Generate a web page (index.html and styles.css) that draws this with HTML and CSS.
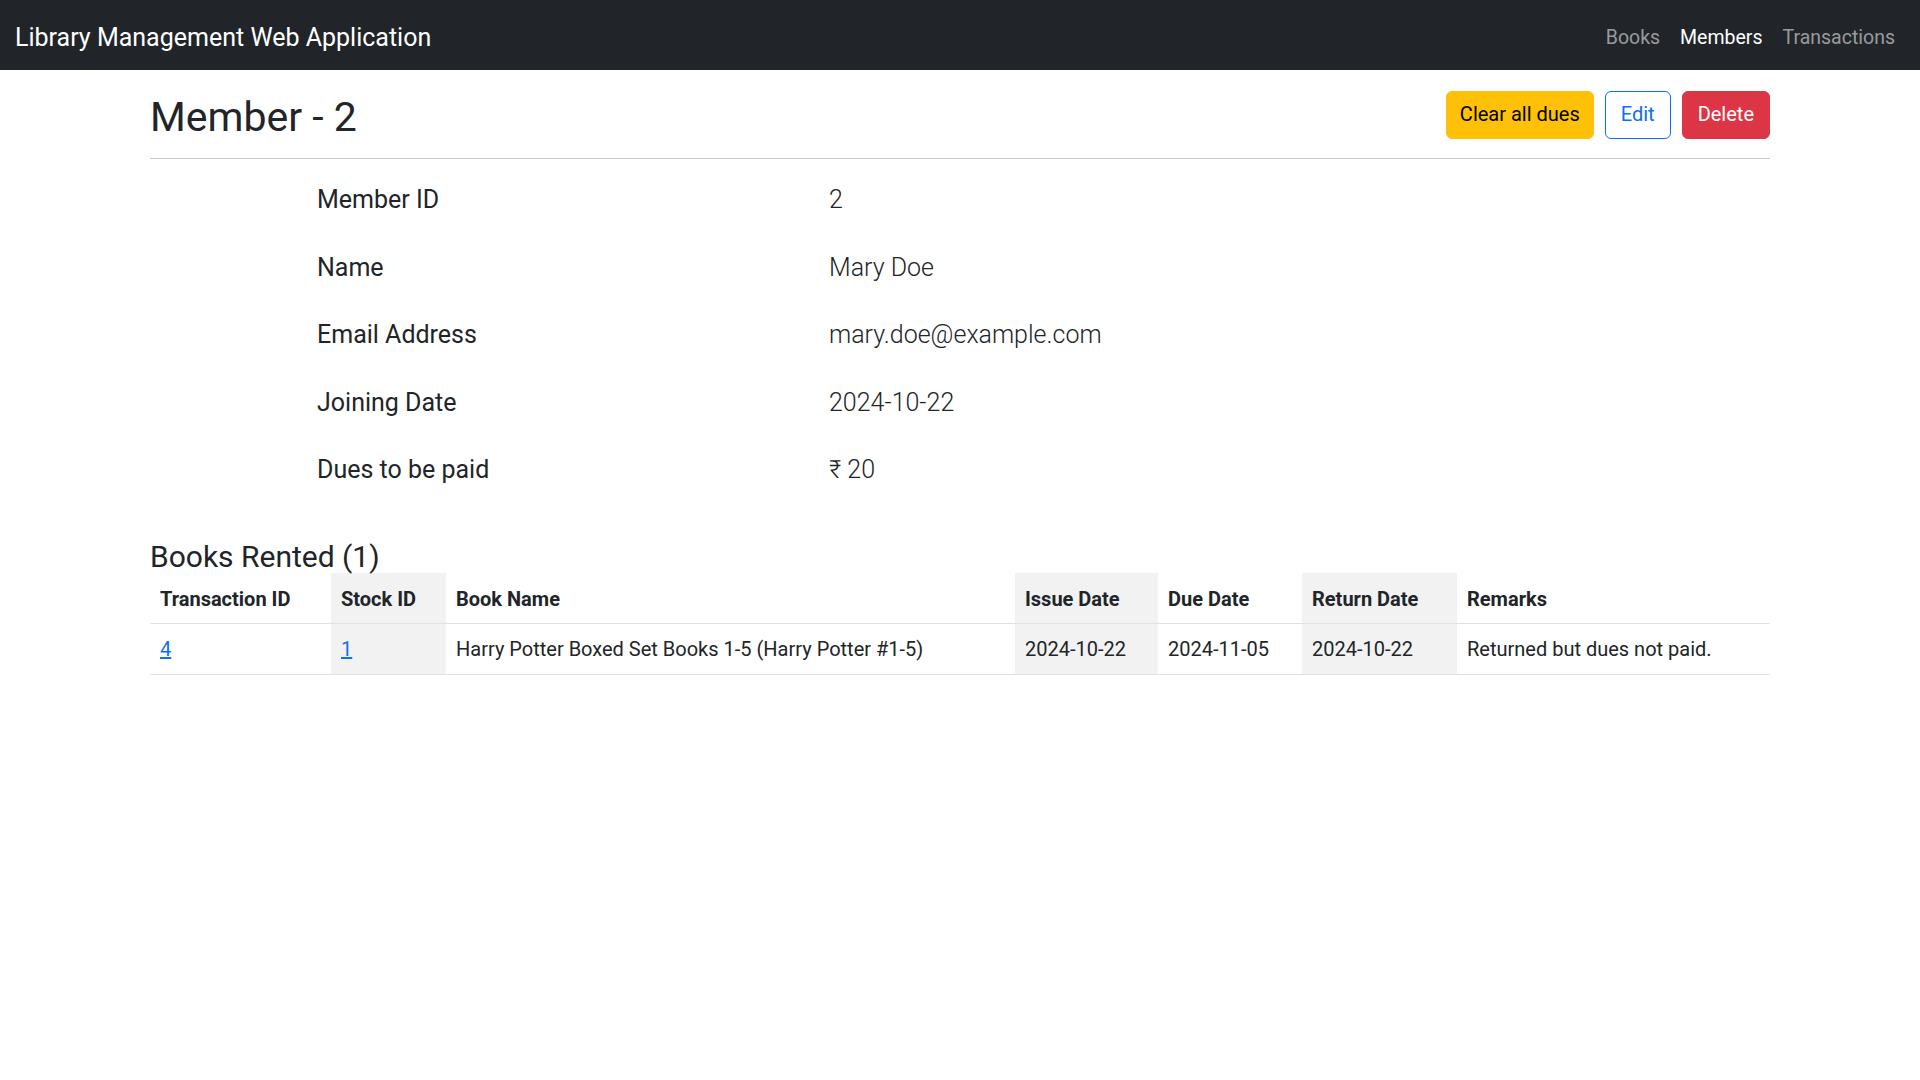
FILE: index.html
```html
<!DOCTYPE html>
<html lang="en">
<head>
<meta charset="utf-8">
<title>Member - 2</title>
<link rel="stylesheet" href="styles.css">
</head>
<body>
<nav class="navbar">
  <a class="brand" href="#">Library Management Web Application</a>
  <ul class="nav">
    <li><a class="nav-link" href="#">Books</a></li>
    <li><a class="nav-link active" href="#">Members</a></li>
    <li><a class="nav-link" href="#">Transactions</a></li>
  </ul>
</nav>
<main class="container">
  <div class="page-head">
    <h2 class="title">Member - 2</h2>
    <div class="actions">
      <button class="btn btn-warning">Clear all dues</button>
      <button class="btn btn-outline-primary">Edit</button>
      <button class="btn btn-danger">Delete</button>
    </div>
  </div>
  <div class="details">
    <div class="label">Member ID</div><div class="value">2</div>
    <div class="label">Name</div><div class="value">Mary Doe</div>
    <div class="label">Email Address</div><div class="value">mary.doe@example.com</div>
    <div class="label">Joining Date</div><div class="value">2024-10-22</div>
    <div class="label">Dues to be paid</div><div class="value">₹ 20</div>
  </div>
  <h4 class="section-title">Books Rented (1)</h4>
  <table class="table">
    <thead>
      <tr>
        <th class="c-tx">Transaction ID</th>
        <th class="c-stock shade">Stock ID</th>
        <th class="c-name">Book Name</th>
        <th class="c-issue shade">Issue Date</th>
        <th class="c-due">Due Date</th>
        <th class="c-ret shade">Return Date</th>
        <th class="c-rem">Remarks</th>
      </tr>
    </thead>
    <tbody>
      <tr>
        <td><a href="#">4</a></td>
        <td class="shade"><a href="#">1</a></td>
        <td>Harry Potter Boxed Set Books 1-5 (Harry Potter #1-5)</td>
        <td class="shade">2024-10-22</td>
        <td>2024-11-05</td>
        <td class="shade">2024-10-22</td>
        <td>Returned but dues not paid.</td>
      </tr>
    </tbody>
  </table>
</main>
</body>
</html>
```

FILE: styles.css
```css
* { box-sizing: border-box; }
html, body { margin: 0; padding: 0; }
body {
  font-family: Roboto, "Noto Sans", "Liberation Sans", sans-serif;
  font-size: 20px;
  line-height: 1.5;
  color: #212529;
  background: #fff;
}
a { color: #0d6efd; }

.navbar {
  background: #212529;
  height: 70px;
  padding: 5px 15px 0;
  display: flex;
  align-items: center;
  justify-content: space-between;
}
.brand {
  color: #fff;
  text-decoration: none;
  font-size: 25px;
  line-height: 37.5px;
  padding: 6px 0;
}
.nav {
  list-style: none;
  margin: 0;
  padding: 0;
  display: flex;
}
.nav-link {
  display: block;
  padding: 8px 10px;
  color: rgba(255,255,255,0.55);
  text-decoration: none;
  font-size: 19.5px;
}
.nav-link.active { color: #fff; }

.container {
  width: 1620px;
  margin: 0 auto;
}
.page-head {
  margin-top: 20px;
  padding-bottom: 10px;
  border-bottom: 1px solid #c9cacb;
  display: flex;
  justify-content: space-between;
  align-items: flex-start;
}
.title {
  margin: 0;
  padding: 0 0 3px;
  font-size: 41px;
  font-weight: 400;
  line-height: 55px;
}
.actions {
  display: flex;
  gap: 11px;
  margin-top: 1px;
}
.btn {
  font-family: inherit;
  font-size: 20px;
  line-height: 31.5px;
  padding: 7px 15px;
  border: 1px solid transparent;
  border-radius: 6px;
  cursor: pointer;
}
.btn-warning { background: #ffc107; border-color: #ffc107; color: #000; padding-left: 13px; padding-right: 13px; }
.btn-outline-primary { background: #fff; border-color: #0d6efd; color: #0d6efd; }
.btn-danger { background: #dc3545; border-color: #dc3545; color: #fff; }

.details {
  margin: 7px 0 0 167px;
  display: grid;
  grid-template-columns: 512px 1fr;
  font-size: 25px;
  line-height: 37.5px;
}
.details > div { padding: 15px 0; }
.value { font-weight: 300; }

.section-title {
  margin: 35px 0 0;
  font-size: 30px;
  font-weight: 400;
  line-height: 36px;
}
.table {
  width: 100%;
  border-collapse: collapse;
  margin-top: -2px;
}
.table th, .table td {
  text-align: left;
  padding: 10px;
  line-height: 30px;
  border-bottom: 1px solid #dee2e6;
  vertical-align: top;
}
.table th { font-weight: 700; }
.table th { padding-top: 11px; padding-bottom: 9px; }
.shade { background: #f2f2f2; }
.c-tx { width: 181px; }
.c-stock { width: 115px; }
.c-name { width: 569px; }
.c-issue { width: 143px; }
.c-due { width: 144px; }
.c-ret { width: 155px; }
```
